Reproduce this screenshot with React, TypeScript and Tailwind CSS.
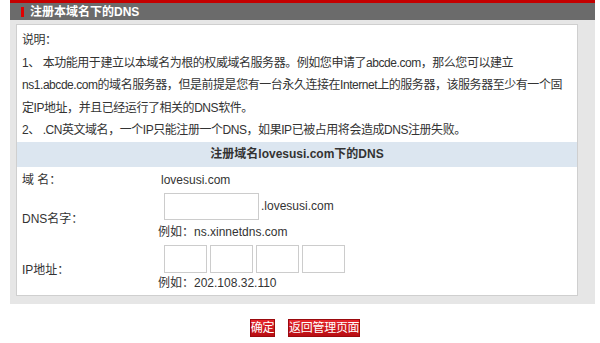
const font = { fontFamily: '"Liberation Sans", Arial, "Noto Sans CJK SC", sans-serif' };

const Label = ({ children }: { children: React.ReactNode }) => (
  <td className="w-[141px] pl-[5px] align-middle">{children}</td>
);

export default function App() {
  return (
    <div className="w-[600px] h-[343px] bg-white text-[12px] text-[#333]" style={font}>
      <div className="ml-[10px] w-[585px]">
        <div className="h-[3px] bg-[#c40000]" />
        <div className="h-[17px] bg-[#6b6b6b] flex items-center">
          <span className="ml-[11px] w-[3px] h-[10px] bg-[#e00000]" />
          <span className="ml-[6px] text-white font-bold text-[12px] leading-none">注册本域名下的DNS</span>
        </div>
        <div className="bg-[#e6e6e6] pt-[4px] pl-[6px] pr-[17px] pb-[8px]">
          <div className="bg-white border border-[#cfcfcf]">
            <div className="pt-[4px] pl-[5px] pr-[4px] leading-[22.5px] tracking-[-0.45px] whitespace-nowrap">
              <p>说明：</p>
              <p>
                1、 本功能用于建立以本域名为根的权威域名服务器。例如您申请了abcde.com，那么您可以建立
                <br />
                ns1.abcde.com的域名服务器，但是前提是您有一台永久连接在Internet上的服务器，该服务器至少有一个固
                <br />
                定IP地址，并且已经运行了相关的DNS软件。
              </p>
              <p>2、 .CN英文域名，一个IP只能注册一个DNS，如果IP已被占用将会造成DNS注册失败。</p>
            </div>
            <div className="h-[25px] bg-[#dce6f0] flex items-center justify-center font-bold">
              注册域名lovesusi.com下的DNS
            </div>
            <table className="w-full border-collapse">
              <tbody>
                <tr className="h-[26px]">
                  <Label>域 名：</Label>
                  <td className="pl-[3px]">lovesusi.com</td>
                </tr>
                <tr>
                  <Label>DNS名字：</Label>
                  <td>
                    <div className="flex items-center">
                      <input className="ml-[6px] w-[95px] h-[27px] border border-[#cccccc] outline-none" />
                      <span className="ml-[2px]">.lovesusi.com</span>
                    </div>
                    <div className="h-[25px] leading-[25px]">例如：ns.xinnetdns.com</div>
                  </td>
                </tr>
                <tr>
                  <Label>IP地址：</Label>
                  <td>
                    <div className="flex gap-[3px] ml-[6px]">
                      <input className="w-[43px] h-[28px] border border-[#cccccc] outline-none" />
                      <input className="w-[43px] h-[28px] border border-[#cccccc] outline-none" />
                      <input className="w-[43px] h-[28px] border border-[#cccccc] outline-none" />
                      <input className="w-[43px] h-[28px] border border-[#cccccc] outline-none" />
                    </div>
                    <div className="h-[20px] leading-[20px] mb-[2px]">例如：202.108.32.110</div>
                  </td>
                </tr>
              </tbody>
            </table>
          </div>
        </div>
      </div>
      <div className="mt-[15px] flex justify-center gap-[13px] pl-[10px]">
        <button className="h-[18px] px-0 bg-gradient-to-b from-[#e5252b] to-[#b80d12] border border-[#9a0a0e] text-white text-[12px] leading-none tracking-[-0.3px]">
          确定
        </button>
        <button className="h-[18px] px-0 bg-gradient-to-b from-[#e5252b] to-[#b80d12] border border-[#9a0a0e] text-white text-[12px] leading-none tracking-[-0.3px]">
          返回管理页面
        </button>
      </div>
    </div>
  );
}
